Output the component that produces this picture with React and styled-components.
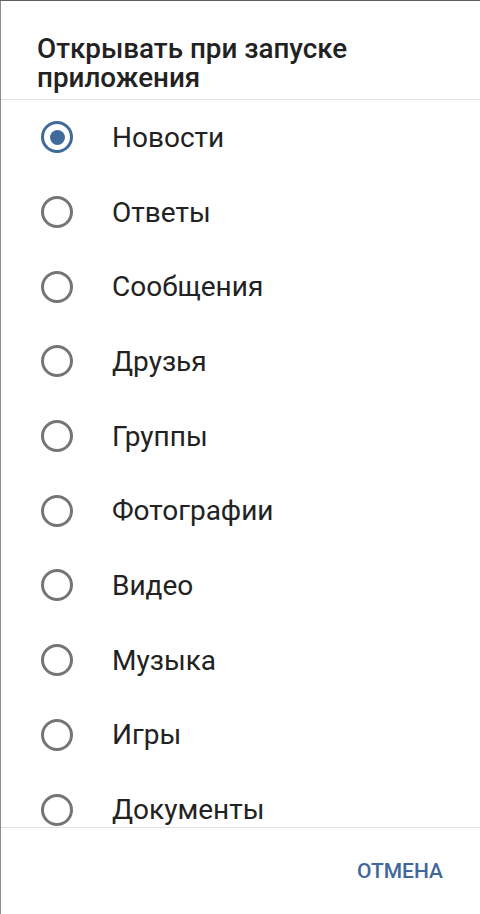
import React, { useState } from "react";
import styled, { createGlobalStyle } from "styled-components";

const GlobalStyle = createGlobalStyle`
  html, body {
    margin: 0;
    padding: 0;
    height: 914px;
    background: #8d8d8d;
    overflow: hidden;
  }
  body {
    font-family: Roboto, "Noto Sans", sans-serif;
  }
  #root {
    height: 100%;
  }
`;

const Backdrop = styled.div`
  height: 914px;
  display: flex;
  flex-direction: column;
  border-top: 1px solid #5f5f5f;
  box-sizing: border-box;
`;

const Dialog = styled.div`
  flex: 1;
  margin-left: 1px;
  background: #fff;
  display: flex;
  flex-direction: column;
  min-height: 0;
`;

const Header = styled.div`
  height: 99px;
  box-sizing: border-box;
  padding: 33px 37px 0 36px;
  border-bottom: 1px solid #e0e0e0;
`;

const Title = styled.h2`
  margin: 0;
  font-size: 27.8px;
  line-height: 29px;
  font-weight: 500;
  color: #222;
`;

const List = styled.div`
  flex: 1;
  overflow: hidden;
  min-height: 0;
`;

const Row = styled.label`
  display: flex;
  align-items: center;
  height: 74.7px;
  cursor: pointer;
`;

const RadioWrap = styled.div`
  width: 111px;
  display: flex;
  justify-content: flex-start;
  padding-left: 40px;
  box-sizing: border-box;
`;

const Radio = styled.span`
  width: 32px;
  height: 32px;
  box-sizing: border-box;
  border-radius: 50%;
  border: 3px solid ${(p) => (p.$on ? "#3f6a9a" : "#757575")};
  display: flex;
  align-items: center;
  justify-content: center;
  &::after {
    content: "";
    width: 15px;
    height: 15px;
    border-radius: 50%;
    background: #3f6a9a;
    display: ${(p) => (p.$on ? "block" : "none")};
  }
`;

const Label = styled.span`
  font-size: 28px;
  color: #222;
  font-weight: 400;
`;

const Footer = styled.div`
  height: 87px;
  border-top: 1px solid #e0e0e0;
  display: flex;
  align-items: center;
  justify-content: flex-end;
  padding-right: 37px;
  box-sizing: border-box;
`;

const TextButton = styled.button`
  border: none;
  background: none;
  padding: 0;
  font-family: Roboto, sans-serif;
  font-size: 21px;
  font-weight: 500;
  color: #41689a;
  text-transform: uppercase;
  cursor: pointer;
`;

const items = [
  "Новости",
  "Ответы",
  "Сообщения",
  "Друзья",
  "Группы",
  "Фотографии",
  "Видео",
  "Музыка",
  "Игры",
  "Документы",
];

const App = () => {
  const [sel, setSel] = useState(0);
  return (
    <>
      <GlobalStyle />
      <Backdrop>
        <Dialog>
          <Header>
            <Title>Открывать при запуске приложения</Title>
          </Header>
          <List>
            {items.map((e, i) => (
              <Row key={e} onClick={() => setSel(i)}>
                <RadioWrap>
                  <Radio $on={sel === i} />
                </RadioWrap>
                <Label>{e}</Label>
              </Row>
            ))}
          </List>
          <Footer>
            <TextButton>Отмена</TextButton>
          </Footer>
        </Dialog>
      </Backdrop>
    </>
  );
};

export default App;
